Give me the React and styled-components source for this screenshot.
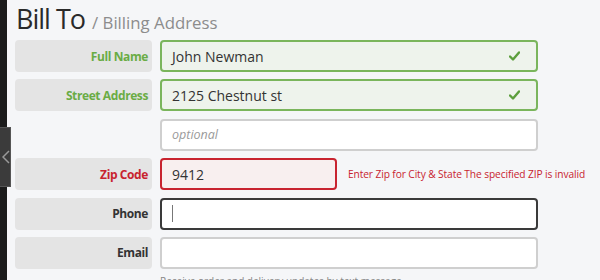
import styled, {createGlobalStyle, css} from "styled-components"

const GREEN = "#6aac45"
const RED = "#c8232f"

const GlobalStyle = createGlobalStyle`
  html, body {
    margin: 0;
    padding: 0;
    background: #f5f6f8;
    font-family: "Open Sans", "Noto Sans", sans-serif;
    overflow: hidden;
  }
`

const Page = styled.div`
  display: flex;
  width: 600px;
  height: 280px;
  position: relative;
  overflow: hidden;
`

const Strip = styled.div`
  width: 7px;
  flex-shrink: 0;
  background: #1b1b1b;
`

const Tab = styled.div`
  position: absolute;
  left: 0;
  top: 127px;
  width: 11px;
  height: 60px;
  background: #3b3b3b;
  border: 1px solid #555;
  border-left: none;
  box-sizing: border-box;
  display: flex;
  align-items: center;
  justify-content: flex-end;
  overflow: hidden;
`

const Content = styled.div`
  flex: 1;
  padding: 0 0 0 8px;
`

const Title = styled.h1`
  margin: 0 0 3px 1px;
  height: 37px;
  font-size: 27px;
  font-weight: 400;
  color: #2a2a2a;
  letter-spacing: -1px;
  line-height: 37px;
  white-space: nowrap;
`

const Sub = styled.span`
  font-size: 16.8px;
  color: #8c8c8c;
  margin-left: 7px;
  letter-spacing: 0;
`

const Rows = styled.div`
  display: flex;
  flex-direction: column;
  gap: 7.4px;
`

const Row = styled.div`
  display: flex;
  align-items: center;
  gap: 8px;
  height: 32px;
`

const LabelBox = styled.div`
  width: 137px;
  height: 32px;
  box-sizing: border-box;
  border-radius: 4px;
  background: ${p => (p.$empty ? "transparent" : "#e4e4e4")};
  display: flex;
  align-items: center;
  justify-content: flex-end;
  padding-right: 4px;
  font-size: 12px;
  letter-spacing: -0.4px;
  font-weight: 700;
  color: ${p => (p.$state === "ok" ? GREEN : p.$state === "err" ? RED : "#333")};
`

const stateStyles = {
  ok: css`
    border: 2px solid #7ab55c;
    background: #eef3ec;
  `,
  err: css`
    border: 2px solid ${RED};
    background: #f8efef;
  `,
  focus: css`
    border: 2px solid #3a3a3a;
    background: #fff;
  `,
  none: css`
    border: 2px solid #cfcfcf;
    background: #fff;
  `,
}

const Field = styled.div`
  width: ${p => p.$width || 378}px;
  height: 32px;
  box-sizing: border-box;
  border-radius: 4px;
  display: flex;
  align-items: center;
  padding: 0 16px 0 10px;
  font-size: 14px;
  color: #333;
  ${p => stateStyles[p.$state || "none"]}
`

const Value = styled.span`
  flex: 1;
`

const Placeholder = styled.span`
  font-style: italic;
  color: #9a9a9a;
  font-size: 12.5px;
`

const Caret = styled.span`
  width: 1px;
  height: 17px;
  background: #777;
`

const Error = styled.span`
  font-size: 10.2px;
  letter-spacing: -0.1px;
  color: ${RED};
  margin-left: 3px;
  white-space: nowrap;
`

const Note = styled.div`
  margin: 5px 0 0 145px;
  font-size: 10px;
  color: #888;
  white-space: nowrap;
`

function Check() {
    return (
        <svg width="11" height="10" viewBox="0 0 11 10">
            <path d="M1 5.5 L4 8.5 L10 1.5" fill="none" stroke="#5c9e3c" strokeWidth="2.4" strokeLinecap="round" strokeLinejoin="round"/>
        </svg>
    )
}

function Chevron() {
    return (
        <svg width="8" height="20" viewBox="0 0 8 20">
            <path d="M7 4 L1 10 L7 16" fill="none" stroke="#9a9a9a" strokeWidth="1.5"/>
        </svg>
    )
}

export default function App() {
    return (
        <Page>
            <GlobalStyle/>
            <Strip/>
            <Tab><Chevron/></Tab>
            <Content>
                <Title>Bill To<Sub>/ Billing Address</Sub></Title>
                <Rows>
                    <Row>
                        <LabelBox $state="ok">Full Name</LabelBox>
                        <Field $state="ok"><Value>John Newman</Value><Check/></Field>
                    </Row>
                    <Row>
                        <LabelBox $state="ok">Street Address</LabelBox>
                        <Field $state="ok"><Value>2125 Chestnut st</Value><Check/></Field>
                    </Row>
                    <Row>
                        <LabelBox $empty/>
                        <Field><Placeholder>optional</Placeholder></Field>
                    </Row>
                    <Row>
                        <LabelBox $state="err">Zip Code</LabelBox>
                        <Field $state="err" $width={177}><Value>9412</Value></Field>
                        <Error>Enter Zip for City &amp; State The specified ZIP is invalid</Error>
                    </Row>
                    <Row>
                        <LabelBox>Phone</LabelBox>
                        <Field $state="focus"><Caret/></Field>
                    </Row>
                    <Row>
                        <LabelBox>Email</LabelBox>
                        <Field/>
                    </Row>
                </Rows>
                <Note>Receive order and delivery updates by text message</Note>
            </Content>
        </Page>
    )
}
